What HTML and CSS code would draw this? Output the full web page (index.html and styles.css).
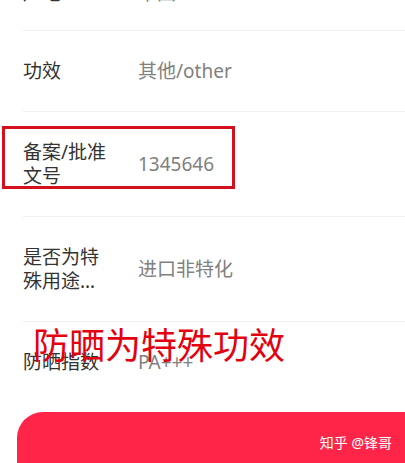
FILE: index.html
```html
<!DOCTYPE html>
<html lang="zh-CN">

<head>
    <meta charset="UTF-8">
    <meta name="viewport" content="width=device-width, initial-scale=1.0">
    <title>产品信息</title>
    <link rel="stylesheet" href="styles.css">
</head>

<body>
    <div class="list">
        <div class="row first">
            <div class="label">产地</div>
            <div class="value">中国</div>
        </div>
        <div class="row">
            <div class="label">功效</div>
            <div class="value">其他/other</div>
        </div>
        <div class="row">
            <div class="label">备案/批准文号</div>
            <div class="value">1345646</div>
        </div>
        <div class="row">
            <div class="label">是否为特殊用途化妆品</div>
            <div class="value">进口非特化</div>
        </div>
        <div class="row last">
            <div class="label">防晒指数</div>
            <div class="value">PA+++</div>
        </div>
    </div>
    <div class="buy"></div>

    <div class="mark-box"></div>
    <div class="note">防晒为特殊功效</div>
    <div class="watermark">知乎 @锋哥</div>
</body>

</html>
```

FILE: styles.css
```css
html,
body {
    margin: 0;
    padding: 0;
    background: #fff;
    overflow: hidden;
}

body {
    position: relative;
    width: 405px;
    height: 463px;
    font-family: "Noto Sans", "Noto Sans CJK SC", sans-serif;
}

.list {
    margin-top: -50px;
    margin-left: 23px;
}

.row {
    display: flex;
    align-items: center;
    padding: 28px 0;
    border-bottom: 1px solid #f0f0f0;
    font-size: 19px;
    line-height: 24px;
}

.row.first {
    padding: 31px 0 25px;
}

.row.last {
    border-bottom: none;
}

.label {
    width: 90px;
    margin-right: 25px;
    color: #333;
    display: -webkit-box;
    -webkit-line-clamp: 2;
    -webkit-box-orient: vertical;
    overflow: hidden;
}

.value {
    flex: 1;
    color: #808080;
}

.buy {
    margin: 10px -30px 0 17px;
    height: 80px;
    background: #ff2548;
    border-radius: 26px;
}

.mark-box {
    position: absolute;
    left: 2px;
    top: 126px;
    width: 227px;
    height: 57px;
    border: 3px solid #d3101c;
}

.note {
    position: absolute;
    left: 33px;
    top: 324px;
    font-size: 36px;
    line-height: 44px;
    color: #e3000f;
}

.watermark {
    position: absolute;
    right: 13px;
    top: 433px;
    font-size: 14px;
    line-height: 20px;
    color: #fff;
}
```
